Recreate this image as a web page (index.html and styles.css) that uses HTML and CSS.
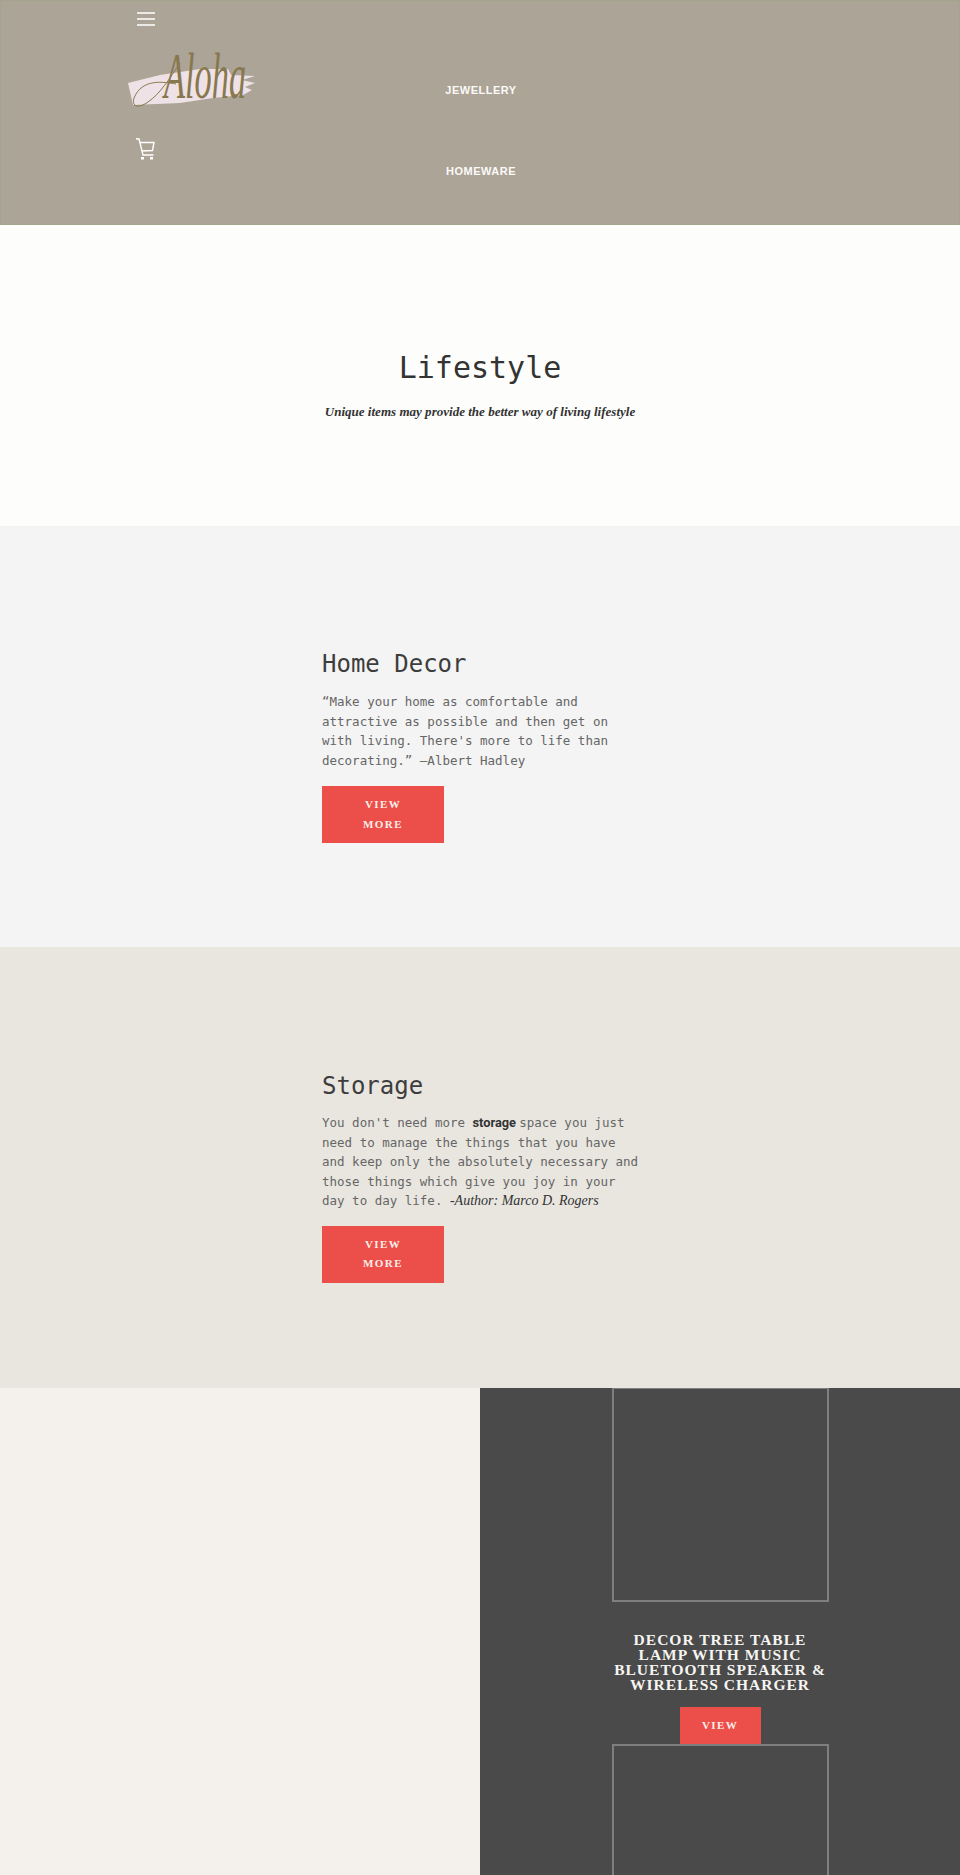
FILE: index.html
```html
<!DOCTYPE html>
<html lang="en">
<head>
<meta charset="utf-8">
<title>Aloha</title>
<link rel="stylesheet" href="styles.css">
</head>
<body>
<header class="site-header">
  <div class="brand-col">
    <svg class="icon-menu" viewBox="0 0 18 14" width="18" height="14"><path d="M0 1h18M0 7h18M0 13h18" fill="none" stroke="#fff" stroke-width="1.4"/></svg>
    <svg class="logo" viewBox="0 0 128 58" width="128" height="58">
      <path d="M0 33 L32 25 L72 19 L100 19 L103 25 L127 26 L114 30 L127 33 L117 37 L124 40 L115 45 L85 48 L52 53 L5 55 L3 46 Z" fill="#efe2e6"/>
      <path d="M48 34 C36 32 14 28 6 48 C3 58 12 58 20 52 C32 44 42 28 52 13" fill="none" stroke="#87784f" stroke-width="1"/>
      <text class="logo-text" transform="translate(36 48) scale(.86 1.65)">Aloha</text>
    </svg>
    <svg class="icon-cart" viewBox="0 0 20 22" width="20" height="22"><path d="M0 .7 L3 1 L7 17 H17.5 M4 4.5 H18 L16.5 12.5 L6 13" fill="none" stroke="#fff" stroke-width="1.4"/><rect x="5" y="19" width="3" height="2.5" fill="#fff"/><rect x="14" y="19" width="3" height="2.5" fill="#fff"/></svg>
  </div>
  <nav class="main-nav">
    <a class="nav-link">JEWELLERY</a>
    <a class="nav-link">HOMEWARE</a>
  </nav>
</header>
<main>
  <section class="hero">
    <h1>Lifestyle</h1>
    <p>Unique items may provide the better way of living lifestyle</p>
  </section>
  <section class="feature feature-gray">
    <div class="feature-body">
      <h2>Home Decor</h2>
      <p>“Make your home as comfortable and attractive as possible and then get on with living. There's more to life than decorating.” —Albert Hadley</p>
      <a class="btn btn-wide">VIEW MORE</a>
    </div>
  </section>
  <section class="feature feature-beige">
    <div class="feature-body">
      <h2>Storage</h2>
      <p>You don't need more <strong>storage </strong>space you just need to manage the things that you have and keep only the absolutely necessary and those things which give you joy in your day to day life. <em>-Author: Marco D. Rogers</em></p>
      <a class="btn btn-wide">VIEW MORE</a>
    </div>
  </section>
  <section class="products">
    <div class="products-left"></div>
    <div class="products-right">
      <article class="product">
        <div class="product-frame"></div>
        <h3>DECOR TREE TABLE LAMP WITH MUSIC BLUETOOTH SPEAKER &amp; WIRELESS CHARGER</h3>
        <a class="btn btn-small">VIEW</a>
      </article>
      <article class="product">
        <div class="product-frame"></div>
      </article>
    </div>
  </section>
</main>
</body>
</html>
```
FILE: styles.css
```css
* { box-sizing: border-box; }
html, body { margin: 0; padding: 0; }
body { width: 960px; height: 1875px; overflow: hidden; background: #fdfdfb; font-family: "DejaVu Sans Mono", monospace; }

.site-header { height: 225px; background: #aca497; display: flex; color: #fff; border: 1px solid #a5a48f; }
.brand-col { width: 315px; padding: 11px 0 0 127px; display: flex; flex-direction: column; align-items: flex-start; }
.icon-menu { display: block; margin-left: 9px; }
.logo { display: block; margin-top: 24px; overflow: visible; }
.logo-text { font-family: "Liberation Serif", serif; font-style: italic; font-size: 40px; fill: #87784f; }
.icon-cart { display: block; margin-top: 30px; margin-left: 8px; }
.main-nav { width: 330px; padding-top: 81px; display: flex; flex-direction: column; align-items: center; gap: 65px; }
.nav-link { font-family: "Liberation Sans", sans-serif; font-weight: 700; font-size: 11px; line-height: 16px; letter-spacing: .5px; color: #fbfaf8; }

.hero { height: 301px; background: #fdfdfb; padding-top: 125px; text-align: center; color: #333; }
.hero h1 { margin: 0; font-weight: 400; font-size: 30px; line-height: 36px; }
.hero p { margin: 16px 0 0; font-family: "Liberation Serif", serif; font-style: italic; font-weight: 700; font-size: 13.05px; line-height: 20px; }

.feature { padding: 124px 0 0 322px; color: #3d3d3d; }
.feature-gray { height: 421px; background: #f4f4f4; }
.feature-beige { height: 441px; background: #e9e6e0; padding-top: 125px; }
.feature-body { width: 322px; }
.feature h2 { margin: 0; font-weight: 400; font-size: 24px; line-height: 29px; }
.feature p { margin: 13px 0 16px; font-size: 12.5px; line-height: 19.5px; color: #666; }
.feature-beige p { margin: 12px 0 15px; }
.feature strong { font-family: Roboto, sans-serif; font-size: 12.8px; line-height: 1; color: #333; }
.feature em { font-family: "Liberation Serif", serif; font-size: 14px; line-height: 1; color: #333; }

.btn { display: block; background: #ec4f4a; color: #fdeeea; font-family: "Liberation Serif", serif; font-weight: 700; font-size: 11px; letter-spacing: 1.4px; line-height: 19.5px; text-align: center; }
.btn-wide { width: 122px; height: 57px; padding: 9px 30px; }
.btn-small { width: 81px; height: 37px; padding: 9px 0; margin: 0 auto; }

.products { height: 487px; display: flex; }
.products-left { width: 480px; background: #f4f1ec; }
.products-right { width: 480px; background: #4a4a4a; display: flex; flex-direction: column; align-items: center; overflow: hidden; }
.product { width: 217px; flex-shrink: 0; }
.product-frame { height: 214px; border: 2px solid #807f7e; border-top-width: 1px; }
.product:last-child .product-frame { height: 300px; border-top-width: 2px; }
.product h3 { margin: 30px 0 15px; font-family: "Liberation Serif", serif; font-weight: 700; font-size: 15.5px; line-height: 15px; letter-spacing: 1px; text-align: center; color: #f6f5f2; }
```
